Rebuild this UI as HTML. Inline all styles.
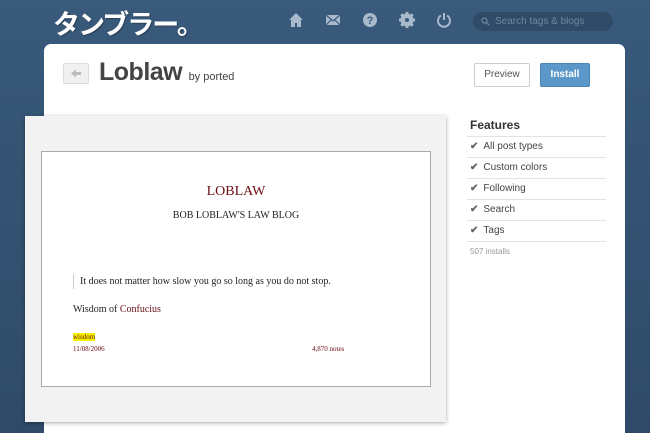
<!DOCTYPE html>
<html><head><meta charset="utf-8"><style>
html,body{margin:0;width:650px;height:433px;overflow:hidden}
body{background:linear-gradient(#395a7b,#2e4a68);font-family:"Liberation Sans",sans-serif;position:relative}
.logo{position:absolute;left:53px;top:3px;font:bold 27px "Noto Sans CJK JP","Liberation Sans",sans-serif;color:#fff;letter-spacing:-2px;text-shadow:1px 1px 1px rgba(0,0,0,.3)}
.ic{position:absolute;top:12px}
.search{position:absolute;left:473px;top:12px;width:140px;height:19px;border-radius:10px;background:#2f4b67;color:#6e88a3;font-size:10px;line-height:19px;text-indent:22px}
.panel{position:absolute;left:44px;top:44px;width:581px;height:389px;background:#fff;border-radius:7px 7px 0 0}
.back{position:absolute;left:63px;top:63px;width:24px;height:19px;border:1px solid #ddd;background:#f0f0f0;border-radius:2px}
h1{position:absolute;left:99px;top:58px;margin:0;font-size:25px;color:#444;font-weight:bold;letter-spacing:-.5px}
h1 span{font-size:11px;font-weight:normal;color:#444;letter-spacing:0}
.btn{position:absolute;top:63px;height:22px;line-height:22px;font-size:10px;text-align:center;border-radius:2px}
.prev{left:474px;width:54px;border:1px solid #ccc;color:#555;background:#fff}
.inst{left:540px;width:48px;border:1px solid #4a85b8;background:#5b97c9;color:#fff;font-weight:bold}
.gray{position:absolute;left:25px;top:116px;width:421px;height:306px;background:#f2f2f2;box-shadow:0 1px 4px rgba(0,0,0,.35)}
.page{position:absolute;left:41px;top:151px;width:388px;height:234px;background:#fff;border:1px solid #aaa;font-family:"Liberation Serif",serif}
.page div{position:absolute}
.feat{position:absolute;left:467px;top:118px;width:139px}
.feat h3{margin:0 0 0 3px;font-size:12px;color:#333;height:18px}
.feat .r{border-top:1px solid #e2e2e2;height:20px;line-height:20px;font-size:10px;color:#444;padding-left:3px}
.feat .r b{color:#666;margin-right:5px;font-size:10px}
</style></head><body>
<div class="logo">タンブラー。</div>
<svg class="ic" style="left:288px" width="16" height="16" viewBox="0 0 16 16"><path d="M8 1L1 8h2v7h4v-4h2v4h4V8h2z" fill="#a8b9cb"/></svg>
<svg class="ic" style="left:325px" width="16" height="16" viewBox="0 0 16 16"><rect x="1" y="3" width="14" height="10" fill="#a8b9cb"/><path d="M1 3l7 6 7-6M1 13l5-5M15 13l-5-5" stroke="#395a7b" stroke-width="1.2" fill="none"/></svg>
<svg class="ic" style="left:362px" width="16" height="16" viewBox="0 0 16 16"><circle cx="8" cy="8" r="7" fill="#a8b9cb"/><text x="8" y="12" font-size="11" font-weight="bold" text-anchor="middle" fill="#395a7b" font-family="Liberation Sans">?</text></svg>
<svg class="ic" style="left:399px" width="16" height="16" viewBox="0 0 16 16"><circle cx="8" cy="8" r="5" fill="none" stroke="#a8b9cb" stroke-width="3"/><path d="M8 0v16M0 8h16M2.3 2.3l11.4 11.4M13.7 2.3L2.3 13.7" stroke="#a8b9cb" stroke-width="3"/><circle cx="8" cy="8" r="2" fill="#395a7b"/></svg>
<svg class="ic" style="left:436px" width="16" height="16" viewBox="0 0 16 16"><path d="M5 3.5A6 6 0 1 0 11 3.5" fill="none" stroke="#a8b9cb" stroke-width="2"/><path d="M8 1v7" stroke="#a8b9cb" stroke-width="2"/></svg>
<div class="search">Search tags &amp; blogs<svg style="position:absolute;left:8px;top:5px" width="9" height="9" viewBox="0 0 9 9"><circle cx="3.5" cy="3.5" r="2.5" fill="none" stroke="#6e88a3" stroke-width="1.2"/><path d="M5.5 5.5L8 8" stroke="#6e88a3" stroke-width="1.4"/></svg></div>
<div class="panel"></div>
<div class="back"><svg width="24" height="19" viewBox="0 0 24 19"><path d="M7 9.5l5-4v2.5h5v3h-5v2.5z" fill="#bbb"/></svg></div>
<h1>Loblaw <span>by ported</span></h1>
<div class="btn prev">Preview</div>
<div class="btn inst">Install</div>
<div class="gray"></div>
<div class="page">
<div style="left:0;width:100%;top:32px;text-align:center;color:#6b0d14;font-size:14px">LOBLAW</div>
<div style="left:0;width:100%;top:58px;text-align:center;color:#222;font-size:10px">BOB LOBLAW'S LAW BLOG</div>
<div style="left:31px;top:122px;border-left:1px solid #ccc;padding-left:6px;font-size:10px;color:#222;line-height:15px">It does not matter how slow you go so long as you do not stop.</div>
<div style="left:31px;top:152px;font-size:10px;color:#222">Wisdom of <span style="color:#6b0d14">Confucius</span></div>
<div style="left:31px;top:181px;font-size:7px;color:#6b0d14;background:#f4f000">wisdom</div>
<div style="left:31px;top:193px;font-size:7px;color:#6b0d14">11/08/2006</div>
<div style="left:270px;top:193px;font-size:7px;color:#6b0d14">4,870 notes</div>
</div>
<div class="feat"><h3>Features</h3>
<div class="r"><b>✔</b>All post types</div>
<div class="r"><b>✔</b>Custom colors</div>
<div class="r"><b>✔</b>Following</div>
<div class="r"><b>✔</b>Search</div>
<div class="r"><b>✔</b>Tags</div>
<div class="r" style="color:#999;font-size:8px">507 installs</div>
</div>
</body></html>
